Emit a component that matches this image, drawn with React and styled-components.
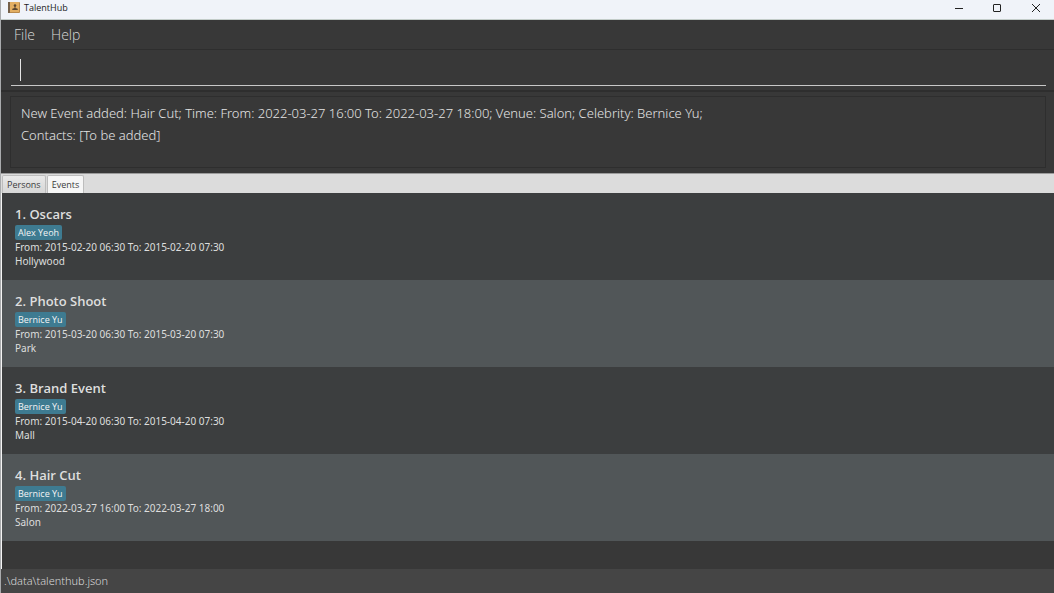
import React, { useState } from "react";
import styled, { createGlobalStyle } from "styled-components";

const GlobalStyle = createGlobalStyle`
  * { box-sizing: border-box; }
  body {
    margin: 0;
    background: #383838;
    font-family: "Open Sans", "Noto Sans", sans-serif;
  }
  button, input { font: inherit; }
`;

const Window = styled.div`
  display: flex;
  flex-direction: column;
  min-height: 100vh;
  background: #383838;
  border-left: 1px solid #a9abad;
`;

const TitleBar = styled.header`
  display: flex;
  align-items: flex-start;
  height: 20px;
  padding-left: 7px;
  background: #f0f3f9;
  border-bottom: 1px solid #c3ccc9;
`;

const AppTitle = styled.h1`
  flex: 1;
  margin: 0 0 0 4px;
  font-size: 9px;
  line-height: 15px;
  font-weight: 400;
  color: #1c1c1c;
`;

const WindowButton = styled.button`
  display: flex;
  justify-content: center;
  align-items: center;
  width: 38px;
  height: 15px;
  padding: 0;
  border: 0;
  background: transparent;
  color: #222;
`;

const MenuBar = styled.nav`
  display: flex;
  align-items: center;
  gap: 16px;
  height: 30px;
  padding: 0 13px;
  border-bottom: 1px solid #2e2e2e;
`;

const MenuItem = styled.button`
  padding: 0;
  border: 0;
  background: transparent;
  color: #d8d8d8;
  font-size: 14px;
  line-height: 20px;
  font-weight: 300;
`;

const CommandPane = styled.div`
  padding: 4px 8px 4px 10px;
  border-bottom: 2px solid #2e2e2e;
`;

const CommandField = styled.label`
  position: relative;
  display: block;
`;

const CommandInput = styled.input`
  display: block;
  width: 100%;
  height: 32px;
  padding: 0 9px;
  border: 0;
  border-bottom: 1px solid #c8c8c8;
  outline: 0;
  background: transparent;
  color: #f0f0f0;
  font-size: 14px;
  font-weight: 300;
  caret-color: transparent;
`;

const Caret = styled.span`
  position: absolute;
  left: 9px;
  top: 5px;
  width: 1px;
  height: 22px;
  background: #e4e4e4;
`;

const ResultPane = styled.div`
  padding: 4px 8px 5px 9px;
`;

const ResultDisplay = styled.output`
  display: block;
  min-height: 72px;
  padding: 5px 10px;
  border: 1px solid #2e2e2e;
  color: #e4e4e4;
  font-family: "Noto Sans", "Open Sans", sans-serif;
  font-size: 13px;
  line-height: 22px;
  font-weight: 300;
`;

const ResultLine = styled.div``;

const TabStrip = styled.div`
  display: flex;
  align-items: flex-end;
  gap: 1px;
  height: 20px;
  padding-left: 1px;
  background: #dcdcdc;
  border-top: 1px solid #9b9b9b;
`;

const Tab = styled.button`
  height: 18px;
  padding: 0 4px;
  border: 1px solid #bdbdbd;
  border-bottom: 0;
  border-radius: 2px 2px 0 0;
  background: ${(p) => (p.$active ? "#f6f6f6" : "linear-gradient(#e9e9e9, #d6d6d6)")};
  color: #3c3c3c;
  font-size: 9px;
  line-height: 16px;
`;

const EventList = styled.ol`
  flex: 1;
  margin: 0;
  padding: 0;
  list-style: none;
  border-left: 1px solid #f4f4f4;
`;

const EventCard = styled.li`
  display: flex;
  flex-direction: column;
  align-items: flex-start;
  height: 87px;
  padding: 12px 13px;
  background: #3c3e3f;
  color: #dedede;

  &:nth-child(even) {
    background: #515658;
  }
`;

const EventName = styled.h2`
  margin: 0 0 2px;
  font-size: 13px;
  line-height: 18px;
  font-weight: 600;
`;

const Tag = styled.span`
  padding: 0 3px;
  border-radius: 2px;
  background: #3e7b91;
  color: #f4f4f4;
  font-size: 9px;
  line-height: 15px;
  font-weight: 500;
`;

const Detail = styled.div`
  font-family: "Noto Sans", "Open Sans", sans-serif;
  font-size: 10px;
  line-height: 14px;
`;

const StatusBar = styled.footer`
  height: 24px;
  padding: 0 3px;
  background: #454545;
  color: #d8d8d8;
  font-family: "Noto Sans", "Open Sans", sans-serif;
  font-size: 11px;
  line-height: 24px;
  font-weight: 300;
`;

const events = [
  { name: "Oscars", celebrity: "Alex Yeoh", from: "2015-02-20 06:30", to: "2015-02-20 07:30", venue: "Hollywood" },
  { name: "Photo Shoot", celebrity: "Bernice Yu", from: "2015-03-20 06:30", to: "2015-03-20 07:30", venue: "Park" },
  { name: "Brand Event", celebrity: "Bernice Yu", from: "2015-04-20 06:30", to: "2015-04-20 07:30", venue: "Mall" },
  { name: "Hair Cut", celebrity: "Bernice Yu", from: "2022-03-27 16:00", to: "2022-03-27 18:00", venue: "Salon" },
];

const AddressBookIcon = () => (
  <svg width="12" height="14" viewBox="0 0 12 14" aria-hidden="true">
    <rect x="0" y="2" width="12" height="11" rx="1" fill="#b98a4c" />
    <rect x="2" y="2" width="9" height="10" fill="#e2ae62" />
    <rect x="0" y="2" width="2" height="11" fill="#75604a" />
    <circle cx="7" cy="5.6" r="1.3" fill="#5a4630" />
    <path d="M6.500 6.500h1v1.500l2.200.8v1.200H4.300V8.800l2.200-.8z" fill="#5a4630" />
  </svg>
);

const MinimizeIcon = () => (
  <svg width="10" height="10" viewBox="0 0 10 10" aria-hidden="true">
    <path d="M1 5.500h8" stroke="currentColor" />
  </svg>
);

const MaximizeIcon = () => (
  <svg width="10" height="10" viewBox="0 0 10 10" aria-hidden="true">
    <rect x="1.500" y="1.500" width="7" height="7" rx="0.500" fill="none" stroke="currentColor" />
  </svg>
);

const CloseIcon = () => (
  <svg width="10" height="10" viewBox="0 0 10 10" aria-hidden="true">
    <path d="M2 1l8 8M10 1L2 9" stroke="currentColor" />
  </svg>
);

export default function App() {
  const [command, setCommand] = useState("");
  return (
    <>
      <GlobalStyle />
      <Window>
        <TitleBar>
          <AddressBookIcon />
          <AppTitle>TalentHub</AppTitle>
          <WindowButton aria-label="Minimize"><MinimizeIcon /></WindowButton>
          <WindowButton aria-label="Maximize"><MaximizeIcon /></WindowButton>
          <WindowButton aria-label="Close"><CloseIcon /></WindowButton>
        </TitleBar>
        <MenuBar>
          <MenuItem>File</MenuItem>
          <MenuItem>Help</MenuItem>
        </MenuBar>
        <CommandPane>
          <CommandField>
            <CommandInput
              type="text"
              aria-label="Command"
              value={command}
              onChange={(e) => setCommand(e.target.value)}
            />
            {command === "" && <Caret />}
          </CommandField>
        </CommandPane>
        <ResultPane>
          <ResultDisplay>
            <ResultLine>
              New Event added: Hair Cut; Time: From: 2022-03-27 16:00 To: 2022-03-27 18:00; Venue: Salon; Celebrity: Bernice Yu;
            </ResultLine>
            <ResultLine>Contacts: [To be added]</ResultLine>
          </ResultDisplay>
        </ResultPane>
        <TabStrip role="tablist">
          <Tab role="tab" aria-selected="false">Persons</Tab>
          <Tab role="tab" aria-selected="true" $active>Events</Tab>
        </TabStrip>
        <EventList>
          {events.map((event, i) => (
            <EventCard key={event.name}>
              <EventName>{i + 1}. {event.name}</EventName>
              <Tag>{event.celebrity}</Tag>
              <Detail>From: {event.from} To: {event.to}</Detail>
              <Detail>{event.venue}</Detail>
            </EventCard>
          ))}
        </EventList>
        <StatusBar>.\data\talenthub.json</StatusBar>
      </Window>
    </>
  );
}
